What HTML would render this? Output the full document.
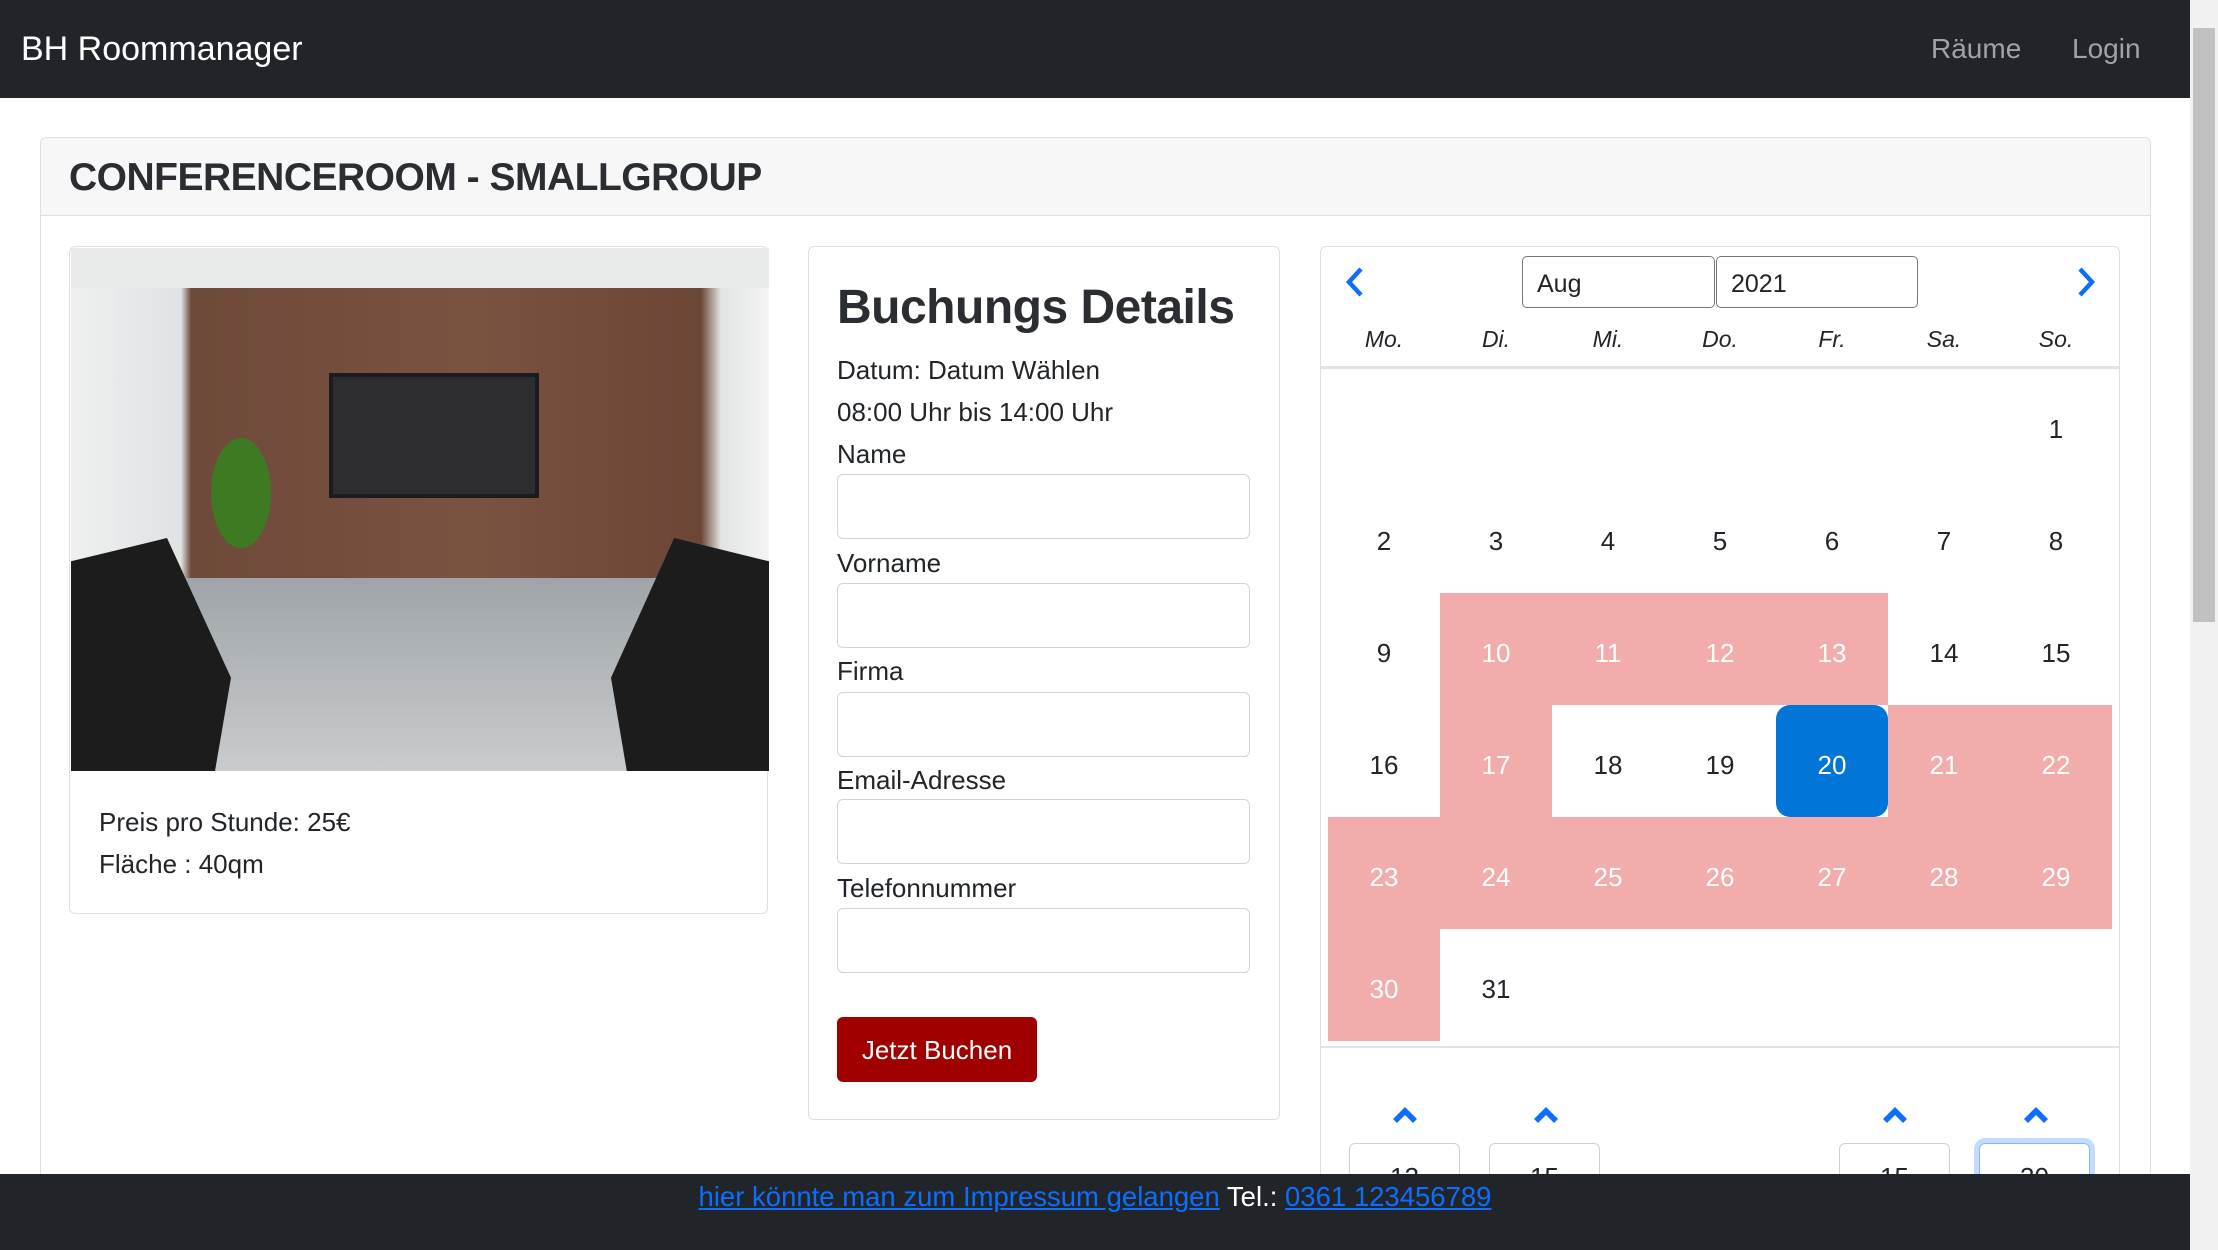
<!DOCTYPE html>
<html><head><meta charset="utf-8"><style>
*{box-sizing:border-box;margin:0;padding:0}
html,body{width:2218px;height:1250px;overflow:hidden}
body{background:#fff;font-family:"Liberation Sans",sans-serif;color:#212529;position:relative}
.abs{position:absolute}
.nav{left:0;top:0;width:2190px;height:98px;background:#212529}
.nav span{position:absolute;font-size:34px}
.sb{left:2190px;top:0;width:28px;height:1250px;background:#f1f1f1}
.thumb{left:2193px;top:28px;width:22px;height:594px;background:#c1c1c1}
.card{border:1px solid #dfdfdf;border-radius:6px;background:#fff}
.lbl{position:absolute;font-size:26px;left:837px}
.inp{position:absolute;left:837px;width:413px;height:65px;border:1px solid #ced4da;border-radius:6px;background:#fff}
.cell{position:absolute;width:112px;height:112px;text-align:center;line-height:112px;padding-top:4px;font-size:26px}
.pk{background:#f2acac;color:#fff}
.wd{position:absolute;top:326px;font-size:23px;font-style:italic;width:112px;text-align:center}
.chev{position:absolute;top:1103px;width:28px;height:22px}
.tin{position:absolute;top:1143px;width:111px;height:60px;border:1px solid #d0d0d0;border-radius:6px;text-align:center;font-size:26px;padding-top:18px}
.foot{left:0;top:1174px;width:2190px;height:76px;background:#212529;text-align:center;font-size:27.5px;color:#fff;padding-top:7px}
.foot a{color:#0d6efd}
</style></head><body>
<div class="abs card" style="left:40px;top:137px;width:2111px;height:1113px"></div>
<div class="abs" style="left:41px;top:138px;width:2109px;height:78px;background:#f7f7f7;border-bottom:1px solid #dfdfdf;border-radius:6px 6px 0 0"></div>
<div class="abs" style="left:69px;top:156px;font-size:39px;font-weight:bold;letter-spacing:-0.5px;color:#2a2d31">CONFERENCEROOM - SMALLGROUP</div>

<div class="abs nav">
<span style="left:21px;top:30px;color:#fff">BH Roommanager</span>
<span style="left:1931px;top:33px;color:#a0a3a6;font-size:28px">Räume</span>
<span style="left:2072px;top:33px;color:#a0a3a6;font-size:28px">Login</span>
</div>
<div class="abs sb"></div><div class="abs thumb"></div>

<div class="abs card" style="left:69px;top:246px;width:699px;height:668px"></div>
<div class="abs" style="left:71px;top:248px;width:698px;height:523px;overflow:hidden;background:linear-gradient(90deg,#eef0f0 0,#dfe3e3 110px,#6e4a3a 120px,#7a5240 400px,#6c4636 630px,#e2e4e4 650px,#f4f4f4 100%)">
 <div class="abs" style="left:0;top:0;width:698px;height:40px;background:#e9ebeb"></div>
 <div class="abs" style="left:258px;top:125px;width:210px;height:125px;background:#2d2d31;border:4px solid #1c1c1e"></div>
 <div class="abs" style="left:90px;top:330px;width:600px;height:193px;background:linear-gradient(180deg,#9fa4a8,#c9ccce)"></div>
 <div class="abs" style="left:0;top:290px;width:160px;height:233px;background:#1c1c1c;clip-path:polygon(0 10%,60% 0,100% 60%,90% 100%,0 100%)"></div>
 <div class="abs" style="left:540px;top:290px;width:158px;height:233px;background:#1c1c1c;clip-path:polygon(40% 0,100% 10%,100% 100%,10% 100%,0 60%)"></div>
 <div class="abs" style="left:140px;top:190px;width:60px;height:110px;background:#3d7a22;border-radius:50%"></div>
</div>
<div class="abs" style="left:99px;top:807px;font-size:26px">Preis pro Stunde: 25€</div>
<div class="abs" style="left:99px;top:849px;font-size:26px">Fläche : 40qm</div>

<div class="abs card" style="left:808px;top:246px;width:472px;height:874px"></div>
<div class="abs" style="left:837px;top:280px;font-size:48px;font-weight:bold;letter-spacing:-0.5px;color:#2a2d31">Buchungs Details</div>
<div class="lbl" style="top:355px">Datum: Datum Wählen</div>
<div class="lbl" style="top:397px">08:00 Uhr bis 14:00 Uhr</div>
<div class="lbl" style="top:439px">Name</div><div class="inp" style="top:474px"></div>
<div class="lbl" style="top:548px">Vorname</div><div class="inp" style="top:583px"></div>
<div class="lbl" style="top:656px">Firma</div><div class="inp" style="top:692px"></div>
<div class="lbl" style="top:765px">Email-Adresse</div><div class="inp" style="top:799px"></div>
<div class="lbl" style="top:873px">Telefonnummer</div><div class="inp" style="top:908px"></div>
<div class="abs" style="left:837px;top:1017px;width:200px;height:65px;background:#a00000;border-radius:6px;color:#fff;font-size:26px;text-align:center;line-height:67px">Jetzt Buchen</div>

<div class="abs card" style="left:1320px;top:246px;width:800px;height:1000px"></div>
<svg class="abs" style="left:1343px;top:266px" width="24" height="32" viewBox="0 0 24 32"><path d="M18 3 L6 16 L18 29" stroke="#0d6efd" stroke-width="4.5" fill="none"/></svg>
<svg class="abs" style="left:2074px;top:266px" width="24" height="32" viewBox="0 0 24 32"><path d="M6 3 L18 16 L6 29" stroke="#0d6efd" stroke-width="4.5" fill="none"/></svg>
<div class="abs" style="left:1522px;top:256px;width:193px;height:52px;border:1px solid #777;border-radius:5px;font-size:25px;padding:13px 14px">Aug</div>
<div class="abs" style="left:1716px;top:256px;width:202px;height:52px;border:1px solid #777;border-radius:5px;font-size:25px;padding:13px 14px">2021</div>
<div class="wd" style="left:1328px">Mo.</div><div class="wd" style="left:1440px">Di.</div><div class="wd" style="left:1552px">Mi.</div><div class="wd" style="left:1664px">Do.</div><div class="wd" style="left:1776px">Fr.</div><div class="wd" style="left:1888px">Sa.</div><div class="wd" style="left:2000px">So.</div>
<div class="abs" style="left:1321px;top:366px;width:798px;height:3px;background:#e3e3e3"></div>
<div class="cell" style="left:2000px;top:369px">1</div>
<div class="cell" style="left:1328px;top:481px">2</div><div class="cell" style="left:1440px;top:481px">3</div><div class="cell" style="left:1552px;top:481px">4</div><div class="cell" style="left:1664px;top:481px">5</div><div class="cell" style="left:1776px;top:481px">6</div><div class="cell" style="left:1888px;top:481px">7</div><div class="cell" style="left:2000px;top:481px">8</div>
<div class="cell" style="left:1328px;top:593px">9</div><div class="cell pk" style="left:1440px;top:593px">10</div><div class="cell pk" style="left:1552px;top:593px">11</div><div class="cell pk" style="left:1664px;top:593px">12</div><div class="cell pk" style="left:1776px;top:593px">13</div><div class="cell" style="left:1888px;top:593px">14</div><div class="cell" style="left:2000px;top:593px">15</div>
<div class="cell" style="left:1328px;top:705px">16</div><div class="cell pk" style="left:1440px;top:705px">17</div><div class="cell" style="left:1552px;top:705px">18</div><div class="cell" style="left:1664px;top:705px">19</div><div class="cell" style="left:1776px;top:705px;background:#0275d8;color:#fff;border-radius:14px">20</div><div class="cell pk" style="left:1888px;top:705px">21</div><div class="cell pk" style="left:2000px;top:705px">22</div>
<div class="cell pk" style="left:1328px;top:817px">23</div><div class="cell pk" style="left:1440px;top:817px">24</div><div class="cell pk" style="left:1552px;top:817px">25</div><div class="cell pk" style="left:1664px;top:817px">26</div><div class="cell pk" style="left:1776px;top:817px">27</div><div class="cell pk" style="left:1888px;top:817px">28</div><div class="cell pk" style="left:2000px;top:817px">29</div>
<div class="cell pk" style="left:1328px;top:929px">30</div><div class="cell" style="left:1440px;top:929px">31</div>
<div class="abs" style="left:1321px;top:1046px;width:798px;height:2px;background:#e3e3e3"></div>
<svg class="chev" style="left:1391px" viewBox="0 0 28 22"><path d="M2 16 L14 4 L26 16 L22 20 L14 12 L6 20Z" fill="#0d6efd"/></svg>
<svg class="chev" style="left:1532px" viewBox="0 0 28 22"><path d="M2 16 L14 4 L26 16 L22 20 L14 12 L6 20Z" fill="#0d6efd"/></svg>
<svg class="chev" style="left:1881px" viewBox="0 0 28 22"><path d="M2 16 L14 4 L26 16 L22 20 L14 12 L6 20Z" fill="#0d6efd"/></svg>
<svg class="chev" style="left:2022px" viewBox="0 0 28 22"><path d="M2 16 L14 4 L26 16 L22 20 L14 12 L6 20Z" fill="#0d6efd"/></svg>
<div class="tin" style="left:1349px">12</div><div class="tin" style="left:1489px">15</div><div class="tin" style="left:1839px">15</div>
<div class="tin" style="left:1979px;border:1px solid #86b7fe;box-shadow:0 0 0 5px #c2dbfe">30</div>

<div class="abs foot"><a href="#">hier könnte man zum Impressum gelangen</a> Tel.: <a href="#">0361 123456789</a></div>
</body></html>
